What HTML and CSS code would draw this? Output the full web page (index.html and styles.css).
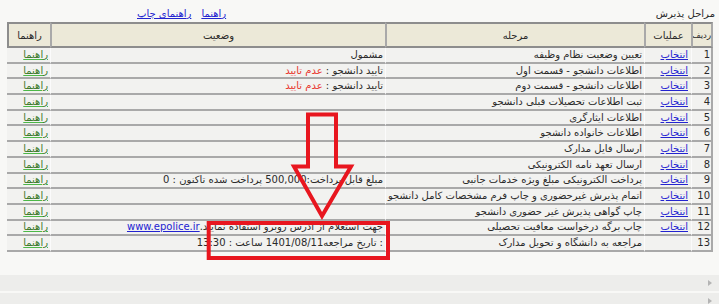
FILE: index.html
```html
<!DOCTYPE html>
<html lang="fa" dir="rtl">
<head>
<meta charset="utf-8">
<title>مراحل پذیرش</title>
<link rel="stylesheet" href="styles.css">
</head>
<body>
<div class="page">
  <div class="head">
    <span class="title">مراحل پذیرش</span>
    <span class="links"><a href="#">راهنما</a><a href="#">راهنمای چاپ</a></span>
  </div>
  <table class="grid">
    <colgroup>
      <col class="w-no"><col class="w-op"><col class="w-step"><col class="w-status"><col class="w-help">
    </colgroup>
    <thead>
      <tr><th class="th-no">ردیف</th><th>عملیات</th><th>مرحله</th><th>وضعیت</th><th>راهنما</th></tr>
    </thead>
    <tbody>
      <tr><td>1</td><td><a class="sel" href="#">انتخاب</a></td><td>تعیین وضعیت نظام وظیفه</td><td>مشمول</td><td><a class="help" href="#">راهنما</a></td></tr>
      <tr><td>2</td><td><a class="sel" href="#">انتخاب</a></td><td>اطلاعات دانشجو - قسمت اول</td><td>تایید دانشجو : <span class="red">عدم تایید</span></td><td><a class="help" href="#">راهنما</a></td></tr>
      <tr><td>3</td><td><a class="sel" href="#">انتخاب</a></td><td>اطلاعات دانشجو - قسمت دوم</td><td>تایید دانشجو : <span class="red">عدم تایید</span></td><td><a class="help" href="#">راهنما</a></td></tr>
      <tr><td>4</td><td><a class="sel" href="#">انتخاب</a></td><td>ثبت اطلاعات تحصیلات قبلی دانشجو</td><td></td><td><a class="help" href="#">راهنما</a></td></tr>
      <tr><td>5</td><td><a class="sel" href="#">انتخاب</a></td><td>اطلاعات ایثارگری</td><td></td><td><a class="help" href="#">راهنما</a></td></tr>
      <tr><td>6</td><td><a class="sel" href="#">انتخاب</a></td><td>اطلاعات خانواده دانشجو</td><td></td><td><a class="help" href="#">راهنما</a></td></tr>
      <tr><td>7</td><td><a class="sel" href="#">انتخاب</a></td><td>ارسال فایل مدارک</td><td></td><td><a class="help" href="#">راهنما</a></td></tr>
      <tr><td>8</td><td><a class="sel" href="#">انتخاب</a></td><td>ارسال تعهد نامه الکترونیکی</td><td></td><td><a class="help" href="#">راهنما</a></td></tr>
      <tr><td>9</td><td><a class="sel" href="#">انتخاب</a></td><td>پرداخت الکترونیکی مبلغ ویژه خدمات جانبی</td><td>مبلغ قابل پرداخت:500,000 پرداخت شده تاکنون : 0</td><td><a class="help" href="#">راهنما</a></td></tr>
      <tr><td>10</td><td><a class="sel" href="#">انتخاب</a></td><td>اتمام پذیرش غیرحضوری و چاپ فرم مشخصات کامل دانشجو</td><td></td><td><a class="help" href="#">راهنما</a></td></tr>
      <tr><td>11</td><td><a class="sel" href="#">انتخاب</a></td><td>چاپ گواهی پذیرش غیر حضوری دانشجو</td><td></td><td><a class="help" href="#">راهنما</a></td></tr>
      <tr><td>12</td><td><a class="sel" href="#">انتخاب</a></td><td>چاپ برگه درخواست معافیت تحصیلی</td><td>جهت استعلام از ادرس روبرو استفاده نمایید.<a class="ext" href="#">www.epolice.ir</a></td><td><a class="help" href="#">راهنما</a></td></tr>
      <tr><td>13</td><td></td><td>مراجعه به دانشگاه و تحویل مدارک</td><td>: تاریخ مراجعه1401/08/11 ساعت : 13:30</td><td><a class="help" href="#">راهنما</a></td></tr>
    </tbody>
  </table>
  <div class="panels">
    <div class="panel"><span class="tri"></span></div>
    <div class="panel"><span class="tri"></span></div>
  </div>
  <svg class="mark" width="719" height="304" viewBox="0 0 719 304">
    <polygon points="308,114.5 336,114.5 336,166.5 351,166.5 322,216 294,166.5 308,166.5" fill="none" stroke="#e8161f" stroke-width="4" stroke-linejoin="miter" stroke-miterlimit="10"/>
    <rect x="208.7" y="223" width="179.3" height="35" fill="none" stroke="#e8161f" stroke-width="4"/>
  </svg>
</div>
</body>
</html>
```

FILE: styles.css
```css
html, body {
  margin: 0;
  padding: 0;
}

body {
  background: #f8f8f6;
  font-family: "DejaVu Sans", sans-serif;
  font-size: 10px;
  color: #2a2a2a;
  direction: rtl;
}

.page {
  position: relative;
  width: 719px;
  height: 304px;
  overflow: hidden;
}

.head {
  display: flex;
  justify-content: space-between;
  align-items: flex-end;
  height: 22px;
  box-sizing: border-box;
  padding: 0 4px 2px 137px;
}

.title {
  font-size: 10px;
  line-height: 12px;
}

.links {
  display: flex;
  gap: 10px;
  line-height: 12px;
}

.links a {
  color: #2323d0;
}

.grid {
  table-layout: fixed;
  border-collapse: separate;
  border-spacing: 0;
  width: 706px;
  margin: 0 6px 0 7px;
}

.w-no { width: 22px; }
.w-op { width: 47px; }
.w-step { width: 259px; }
.w-status { width: 335px; }
.w-help { width: 43px; }

.grid th {
  background: #ece9d8;
  font-weight: normal;
  height: 26px;
  padding: 0;
  text-align: center;
  white-space: nowrap;
  overflow: hidden;
  border-top: 2px solid #8d8d8d;
  border-bottom: 2px solid #8d8d8d;
  border-left: 2px solid #a9a9a9;
  box-sizing: border-box;
}

.grid th.th-no {
  font-size: 8.5px;
  border-right: 2px solid #a9a9a9;
}

.grid th:last-child {
  border-left: 2px solid #8d8d8d;
}

.grid td {
  background: #f2f2f0;
  height: 15.7px;
  box-sizing: border-box;
  padding: 0 2px;
  line-height: 12px;
  white-space: nowrap;
  overflow: hidden;
  text-align: right;
  border-bottom: 2px solid #a9a9a9;
  border-left: 1px solid #fbfbfb;
}

.grid td:first-child {
  border-right: 2px solid #a9a9a9;
  padding-right: 1px;
}

.grid td:last-child {
  border-left: none;
}

.grid td:nth-child(2) {
  padding-right: 3px;
}

.sel {
  color: #2323d0;
}

.ext {
  color: #2323d0;
}

.help {
  color: #3e7a2c;
  text-decoration-color: #4cb848;
}

.red {
  color: #e8332a;
}

.panels {
  margin-top: 23px;
  display: flex;
  flex-direction: column;
  gap: 2px;
}

.panel {
  height: 16px;
  background: #ededeb;
  display: flex;
  align-items: center;
  padding-right: 7px;
}

.tri {
  width: 0;
  height: 0;
  border-left: 4px solid #b4b4b4;
  border-top: 3.5px solid transparent;
  border-bottom: 3.5px solid transparent;
}

.mark {
  position: absolute;
  left: 0;
  top: 0;
  pointer-events: none;
}
```
